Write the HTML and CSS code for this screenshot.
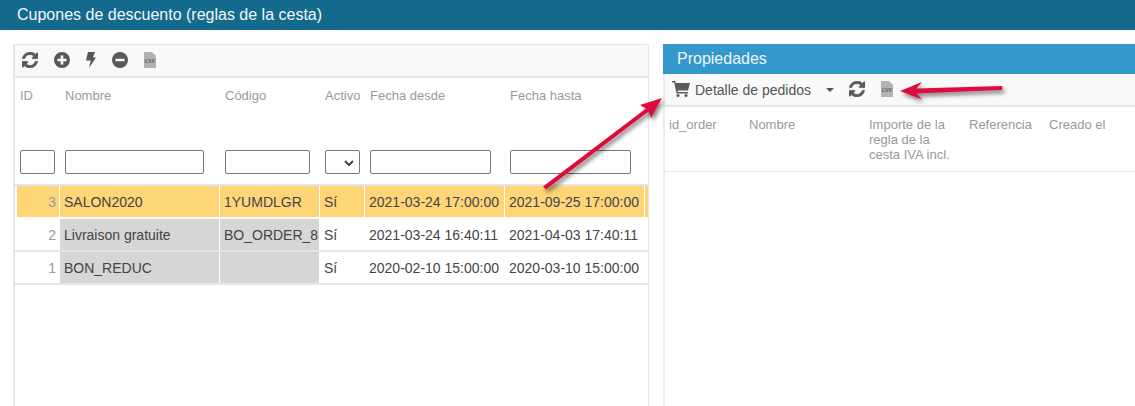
FILE: index.html
```html
<!DOCTYPE html>
<html lang="es">
<head>
<meta charset="utf-8">
<title>Cupones de descuento</title>
<link rel="stylesheet" href="styles.css">
</head>
<body>
<svg width="0" height="0" class="defs" aria-hidden="true">
  <defs>
    <symbol id="i-refresh" viewBox="0 0 1536 1536"><path d="M1511 928q0 5-1 7-64 268-268 434.500T764 1536q-146 0-282.500-55T238 1324l-129 129q-19 19-45 19t-45-19-19-45V960q0-26 19-45t45-19h448q26 0 45 19t19 45-19 45l-137 137q71 66 161 102t187 36q134 0 250-65t186-179q11-17 53-117 8-23 30-23h192q13 0 22.500 9.500t9.500 22.500zm25-800v448q0 26-19 45t-45 19h-448q-26 0-45-19t-19-45 19-45l138-138Q969 256 768 256q-134 0-250 65T332 500q-11 17-53 117-8 23-30 23H50q-13 0-22.500-9.500T18 608v-7q65-268 270-434.500T768 0q146 0 284 55.500T1297 212l130-129q19-19 45-19t45 19 19 45z"/></symbol>
    <symbol id="i-plus" viewBox="0 0 16 16"><path fill-rule="evenodd" d="M8 0a8 8 0 1 1 0 16A8 8 0 0 1 8 0zM6.700 3.500v3.200H3.500v2.600h3.200v3.200h2.600V9.300h3.200V6.700H9.300V3.500z"/></symbol>
    <symbol id="i-minus" viewBox="0 0 16 16"><path fill-rule="evenodd" d="M8 0a8 8 0 1 1 0 16A8 8 0 0 1 8 0zM3.500 6.700v2.600h9V6.700z"/></symbol>
    <symbol id="i-bolt" viewBox="0 0 10 16"><path d="M2 0h7L7 5.500h3L3 16l1.700-7.500H0z"/></symbol>
    <symbol id="i-cart" viewBox="0 0 18 16"><path d="M0 0h3.200l.6 2H18l-2 7.500H5.500l.4 1.500H16v1.500H4.600L2.200 1.500H0z"/><circle cx="6" cy="14.500" r="1.500"/><circle cx="14" cy="14.500" r="1.500"/></symbol>
  </defs>
</svg>

<header class="page-title">Cupones de descuento (reglas de la cesta)</header>

<main class="workspace">
  <section class="panel panel-left">
    <div class="toolbar toolbar-left">
      <svg class="icon icon-refresh"><use href="#i-refresh"/></svg>
      <svg class="icon icon-plus"><use href="#i-plus"/></svg>
      <svg class="icon icon-bolt"><use href="#i-bolt"/></svg>
      <svg class="icon icon-minus"><use href="#i-minus"/></svg>
      <span class="csv"><span class="csv-label">csv</span></span>
    </div>
    <div class="table">
      <div class="row head-row">
        <div class="th">ID<input class="filter" type="text"></div>
        <div class="th">Nombre<input class="filter" type="text"></div>
        <div class="th">Código<input class="filter" type="text"></div>
        <div class="th">Activo<span class="filter select-filter"><svg class="chevron" viewBox="0 0 10 6"><path d="M1 1l4 4 4-4"/></svg></span></div>
        <div class="th">Fecha desde<input class="filter" type="text"></div>
        <div class="th">Fecha hasta<input class="filter" type="text"></div>
      </div>
      <div class="row data-row selected">
        <div class="td num">3</div><div class="td">SALON2020</div><div class="td">1YUMDLGR</div><div class="td">Sí</div><div class="td">2021-03-24 17:00:00</div><div class="td">2021-09-25 17:00:00</div><div class="td td-end"></div>
      </div>
      <div class="row data-row">
        <div class="td num">2</div><div class="td grey">Livraison gratuite</div><div class="td grey">BO_ORDER_8</div><div class="td">Sí</div><div class="td">2021-03-24 16:40:11</div><div class="td">2021-04-03 17:40:11</div><div class="td td-end"></div>
      </div>
      <div class="row data-row">
        <div class="td num">1</div><div class="td grey">BON_REDUC</div><div class="td grey"></div><div class="td">Sí</div><div class="td">2020-02-10 15:00:00</div><div class="td">2020-03-10 15:00:00</div><div class="td td-end"></div>
      </div>
    </div>
  </section>

  <section class="panel-right">
    <h2 class="panel-heading">Propiedades</h2>
    <div class="toolbar toolbar-right">
      <svg class="icon icon-cart"><use href="#i-cart"/></svg>
      <span class="tool-label">Detalle de pedidos</span>
      <span class="caret"></span>
      <svg class="icon icon-refresh"><use href="#i-refresh"/></svg>
      <span class="csv"><span class="csv-label">csv</span></span>
    </div>
    <div class="props-head">
      <div class="ph">id_order</div>
      <div class="ph">Nombre</div>
      <div class="ph">Importe de la regla de la cesta IVA incl.</div>
      <div class="ph">Referencia</div>
      <div class="ph">Creado el</div>
    </div>
  </section>
</main>

<svg class="annotations" viewBox="0 0 1135 406" aria-hidden="true">
  <defs>
    <filter id="arrow-shadow" x="-20%" y="-20%" width="140%" height="140%">
      <feDropShadow dx="2" dy="3" stdDeviation="2" flood-color="#000" flood-opacity=".5"/>
    </filter>
  </defs>
  <g filter="url(#arrow-shadow)" fill="#dc0f3c">
    <path d="M543 186.500L646 108.500 640 105 662 98 651 118 648.500 111.500 546 189.500z"/>
    <path d="M900 91L922 82 916.500 88.500 1002 86q1 2 0 4L916.500 93.500 922 99.500z"/>
  </g>
</svg>
</body>
</html>
```
FILE: styles.css
```css
* { box-sizing: border-box; }
html, body { margin: 0; height: 406px; overflow: hidden; background: #fff; }
body { font-family: "Liberation Sans", Arial, sans-serif; color: #444; position: relative; }
.defs { position: absolute; }

.page-title {
  height: 30px;
  padding: 0 17px;
  background: #146a8c;
  color: #f2f7fa;
  font-size: 16px;
  line-height: 29px;
}

.workspace {
  display: flex;
  gap: 14px;
  height: 376px;
  padding: 14px 0 0 13px;
}

.panel-left {
  width: 636px;
  flex: none;
  border: 1px solid #e6e6e6;
  border-bottom: 0;
  border-left-width: 2px;
  border-radius: 2px 2px 0 0;
}

.toolbar { display: flex; align-items: center; background: #f9f9f9; border-bottom: 2px solid #e6e6e6; }
.toolbar-left { height: 33px; padding: 0 0 1px 7px; }
.toolbar-right { height: 33px; padding: 0 0 1px 7px; }

.icon { fill: #58595b; flex: none; display: block; }
.icon-refresh { width: 16px; height: 16px; stroke: #58595b; stroke-width: 40; overflow: visible; }
.icon-plus, .icon-minus { width: 16px; height: 16px; }
.icon-bolt { width: 10px; height: 16px; }
.icon-cart { width: 18px; height: 16px; }
.toolbar-left .icon-plus { margin-left: 16px; }
.toolbar-left .icon-bolt { margin-left: 16px; }
.toolbar-left .icon-minus { margin-left: 16px; }
.toolbar-left .csv { margin-left: 16px; }

.csv {
  display: block;
  flex: none;
  position: relative;
  width: 12px;
  height: 16px;
  background: #b2b2b2;
  clip-path: polygon(0 0, 8px 0, 12px 4px, 12px 16px, 0 16px);
}
.csv-label {
  position: absolute;
  left: 0;
  right: 0;
  bottom: 3px;
  text-align: center;
  font: 8px/8px "Liberation Serif", serif;
  color: #444;
}

.row { display: grid; grid-template-columns: 45px 160px 100px 45px 140px 140px 1fr; }

.head-row { height: 108px; border-bottom: 2px solid #e6e6e6; }
.th {
  padding: 10px 0 10px 5px;
  font-size: 13px;
  line-height: 15px;
  color: #9a9a9a;
  display: flex;
  flex-direction: column;
  justify-content: space-between;
}
.filter {
  display: block;
  height: 24px;
  margin: 0;
  padding: 0;
  background: #fff;
  border: 1px solid #767676;
  border-radius: 2px;
}
.th:nth-child(1) .filter { width: 35px; }
.th:nth-child(2) .filter { width: 139px; }
.th:nth-child(3) .filter { width: 85px; }
.th:nth-child(5) .filter { width: 121px; }
.th:nth-child(6) .filter { width: 121px; }
.select-filter { width: 35px; position: relative; }
.chevron {
  position: absolute;
  right: 5px;
  top: 9px;
  width: 10px;
  height: 6px;
  fill: none;
  stroke: #444;
  stroke-width: 2;
}

.data-row { height: 33px; border-bottom: 2px solid #e6e6e6; }
.td {
  padding: 0 0 0 4px;
  font-size: 14px;
  line-height: 33px;
  color: #444;
  white-space: nowrap;
  overflow: hidden;
  margin-right: 1px;
  height: 31px;
}
.td.num { text-align: right; padding-right: 3px; color: #999; margin-left: 2px; }
.td-end { margin-right: 0; padding: 0; }
.grey { background: #d6d6d6; }
.selected { border-bottom-color: #fff; }
.selected .td { background: #ffd677; }

.panel-right {
  flex: 1;
  min-width: 0;
  border-left: 2px solid #ebebeb;
}
.panel-heading {
  height: 30px;
  margin: 0 0 0 -2px;
  padding-left: 14px;
  background: #3498cc;
  color: #eef6fb;
  font-size: 16px;
  font-weight: 400;
  line-height: 29px;
}
.toolbar-right .tool-label { margin: 2px 0 0 5px; font-size: 14px; color: #555; }
.caret {
  margin: 2px 0 0 15px;
  border-left: 4px solid transparent;
  border-right: 4px solid transparent;
  border-top: 4px solid #555;
}
.toolbar-right .icon-refresh { margin-left: 15px; }
.toolbar-right .csv { margin-left: 16px; }

.props-head {
  display: grid;
  grid-template-columns: 80px 120px 100px 80px 80px;
  height: 65px;
  padding: 10px 0 0 4px;
  border-bottom: 1px solid #e6e6e6;
}
.ph { font-size: 13px; line-height: 15px; color: #999; }
.ph:nth-child(3) { padding-right: 14px; }

.annotations {
  position: absolute;
  left: 0;
  top: 0;
  width: 1135px;
  height: 406px;
  pointer-events: none;
}
```
